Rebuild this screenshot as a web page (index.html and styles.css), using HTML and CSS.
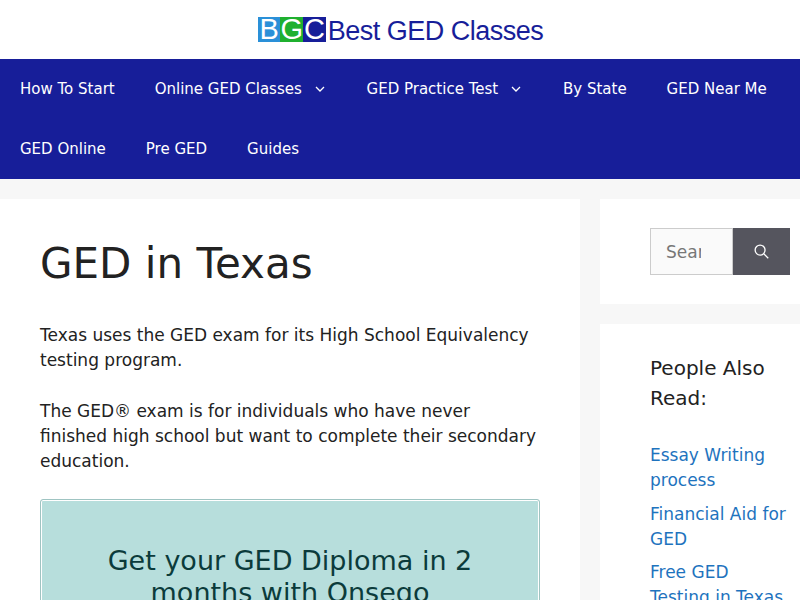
FILE: index.html
```html
<!DOCTYPE html>
<html lang="en">
<head>
<meta charset="UTF-8" />
<meta name="viewport" content="width=device-width, initial-scale=1.0" />
<title>GED in Texas</title>
<link rel="stylesheet" href="styles.css">
</head>
<body>

<header class="site-header">
  <a href="#" class="logo">
    <span class="logo-box">
      <span class="logo-b">B</span>
      <span class="logo-g">G</span>
      <span class="logo-c">C</span>
    </span>
    <span class="logo-text">Best GED Classes</span>
  </a>
</header>

<nav class="main-nav">
  <a href="#">How To Start</a>
  <a href="#">Online GED Classes
    <svg class="caret" viewBox="0 0 10 6"><path d="M1 1l4 4 4-4"/></svg>
  </a>
  <a href="#">GED Practice Test
    <svg class="caret" viewBox="0 0 10 6"><path d="M1 1l4 4 4-4"/></svg>
  </a>
  <a href="#">By State</a>
  <a href="#">GED Near Me</a>
  <a href="#">GED Online</a>
  <a href="#">Pre GED</a>
  <a href="#">Guides</a>
</nav>

<div class="page">
  <main class="content">
    <h1>GED in Texas</h1>
    <p>Texas uses the GED exam for its High School Equivalency testing program.</p>
    <p>The GED® exam is for individuals who have never finished high school but want to complete their secondary education.</p>
    <div class="promo">
      <h2>Get your GED Diploma in 2 months with Onsego</h2>
    </div>
  </main>

  <aside class="sidebar">
    <div class="widget search-widget">
      <form class="search">
        <input type="text" placeholder="Search">
        <button type="button" aria-label="Search">
          <svg viewBox="0 0 16 16"><circle cx="6.5" cy="6.5" r="5.3"/><path d="M10.4 10.4L15.2 15.2"/></svg>
        </button>
      </form>
    </div>
    <div class="widget">
      <h3>People Also Read:</h3>
      <ul>
        <li><a href="#">Essay Writing process</a></li>
        <li><a href="#">Financial Aid for GED</a></li>
        <li><a href="#">Free GED Testing in Texas</a></li>
      </ul>
    </div>
  </aside>
</div>

</body>
</html>
```

FILE: styles.css
```css
html, body {
  height: 600px;
  overflow: hidden;
}
body {
  margin: 0;
  background-color: #f7f7f7;
  color: #222;
  font-family: "DejaVu Sans", sans-serif;
  font-size: 17px;
  line-height: 25px;
}
a {
  text-decoration: none;
}

.site-header {
  background-color: white;
  height: 59px;
  display: flex;
  justify-content: center;
  align-items: center;
}
.logo {
  display: flex;
  align-items: center;
  gap: 2px;
  margin-left: 1px;
}
.logo-box {
  display: flex;
  height: 25px;
  font-family: "Liberation Sans", sans-serif;
  font-size: 29px;
  line-height: 25px;
  color: white;
}
.logo-box span {
  width: 22.67px;
  text-align: center;
}
.logo-b { background-color: #2a90d8; }
.logo-g { background-color: #1fb02f; }
.logo-c { background-color: #171e99; }
.logo-text {
  font-family: "Liberation Sans", sans-serif;
  font-size: 27px;
  line-height: 30px;
  letter-spacing: -0.5px;
  color: #171e99;
  position: relative;
  top: 1px;
}

.main-nav {
  background-color: #171e99;
  display: flex;
  flex-wrap: wrap;
  padding-right: 12px;
}
.main-nav a {
  color: white;
  font-size: 15px;
  line-height: 60px;
  padding: 0 20px;
}
.caret {
  width: 10px;
  height: 6px;
  margin-left: 8px;
  margin-right: 2px;
  vertical-align: 2px;
  fill: none;
  stroke: white;
  stroke-width: 1.3;
}

.page {
  display: flex;
  gap: 20px;
  margin-top: 20px;
}
.content {
  width: 500px;
  padding: 40px;
  background-color: white;
}
.content h1 {
  margin: 0 0 34px;
  font-size: 42px;
  font-weight: 400;
  line-height: 50px;
  color: #222;
}
.content p {
  margin: 0 0 26px;
}
.promo {
  margin-top: -1px;
  background-color: #b7dedc;
  border: 1px solid #9fc4c2;
  box-shadow: inset 0 0 0 1px white;
  border-radius: 3px;
  padding: 45px 41px;
  text-align: center;
}
.promo h2 {
  margin: 0;
  font-size: 27px;
  font-weight: 400;
  line-height: 32px;
  color: #0b3b3b;
}

.sidebar {
  flex: 1;
  display: flex;
  flex-direction: column;
  gap: 20px;
}
.widget {
  background-color: white;
  padding: 29px 10px 29px 50px;
}
.search {
  display: flex;
}
.search input {
  width: 83px;
  height: 47px;
  box-sizing: border-box;
  padding: 0 31px 0 15px;
  border: 1px solid #ccc;
  background-color: #fafafa;
  font-family: inherit;
  font-size: 17px;
  color: #666;
}
.search input::placeholder {
  color: #777;
  opacity: 1;
}
.search button {
  width: 57px;
  height: 47px;
  padding: 0;
  border: none;
  background-color: #55555e;
  display: flex;
  align-items: center;
  justify-content: center;
}
.search svg {
  width: 15px;
  height: 15px;
  margin-bottom: 1px;
  fill: none;
  stroke: white;
  stroke-width: 1.4;
}
.widget h3 {
  margin: 0 0 30px;
  font-size: 20px;
  font-weight: 400;
  line-height: 30px;
}
.widget ul {
  margin: 0;
  padding: 0;
  list-style: none;
}
.widget li {
  margin-bottom: 8.5px;
}
.widget li a {
  color: #1e73be;
}
```
